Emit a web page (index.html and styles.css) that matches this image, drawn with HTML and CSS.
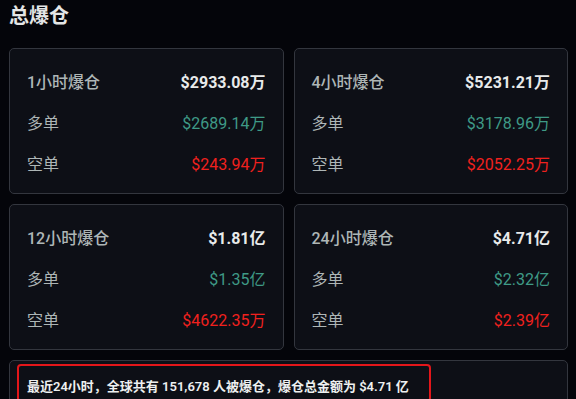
FILE: index.html
```html
<!DOCTYPE html>
<html lang="zh">
<head>
<meta charset="utf-8">
<link rel="stylesheet" href="styles.css">
</head>
<body>
<div class="page">
  <h1 class="title">总爆仓</h1>
  <div class="grid">
    <div class="card">
      <div class="row"><span class="label head">1小时爆仓</span><span class="value">$2933.08万</span></div>
      <div class="row"><span class="label">多单</span><span class="num long">$2689.14万</span></div>
      <div class="row"><span class="label">空单</span><span class="num short">$243.94万</span></div>
    </div>
    <div class="card">
      <div class="row"><span class="label head">4小时爆仓</span><span class="value">$5231.21万</span></div>
      <div class="row"><span class="label">多单</span><span class="num long">$3178.96万</span></div>
      <div class="row"><span class="label">空单</span><span class="num short">$2052.25万</span></div>
    </div>
    <div class="card">
      <div class="row"><span class="label head">12小时爆仓</span><span class="value">$1.81亿</span></div>
      <div class="row"><span class="label">多单</span><span class="num long">$1.35亿</span></div>
      <div class="row"><span class="label">空单</span><span class="num short">$4622.35万</span></div>
    </div>
    <div class="card">
      <div class="row"><span class="label head">24小时爆仓</span><span class="value">$4.71亿</span></div>
      <div class="row"><span class="label">多单</span><span class="num long">$2.32亿</span></div>
      <div class="row"><span class="label">空单</span><span class="num short">$2.39亿</span></div>
    </div>
  </div>
  <div class="summary">
    <div class="highlight">最近24小时，全球共有 151,678 人被爆仓，爆仓总金额为 $4.71 亿</div>
  </div>
</div>
</body>
</html>
```

FILE: styles.css
```css
html, body {
  margin: 0;
  padding: 0;
  background: #04050a;
  height: 100%;
  overflow: hidden;
}
.page {
  padding: 0 8px 0 9px;
  font-family: Roboto, "Noto Sans CJK SC", sans-serif;
  color: #e6e8e8;
}
.title {
  margin: 0;
  padding: 3px 0 0 0;
  height: 48px;
  box-sizing: border-box;
  font-family: "Noto Sans CJK SC", sans-serif;
  font-size: 20px;
  line-height: 24px;
  font-weight: 700;
  color: #e4e6e6;
}
.grid {
  display: grid;
  grid-template-columns: 1fr 1fr;
  column-gap: 10px;
  row-gap: 10px;
}
.card {
  background: #0d0f16;
  border: 1px solid #33363e;
  border-radius: 5px;
  padding: 22px 17px 16px 17px;
  display: flex;
  flex-direction: column;
  gap: 17px;
}
.row {
  display: flex;
  justify-content: space-between;
  align-items: center;
  height: 24px;
  font-size: 16px;
  line-height: 24px;
}
.label {
  color: #aeb6b6;
}
.label.head {
  font-weight: 500;
}
.value {
  font-weight: 700;
  color: #e8eaea;
}
.num.long {
  color: #3f9a86;
}
.num.short {
  color: #f0211e;
}
.summary {
  margin-top: 10px;
  background: #0d0f16;
  border: 1px solid #33363e;
  border-radius: 5px;
  padding: 3px 7px 10px 7px;
}
.highlight {
  border: 2px solid #e3161a;
  border-radius: 4px;
  width: 414px;
  box-sizing: border-box;
  padding: 12px 8px 4px 8px;
  font-size: 13px;
  line-height: 18px;
  font-weight: 600;
  color: #eef0f0;
  white-space: nowrap;
}
```
